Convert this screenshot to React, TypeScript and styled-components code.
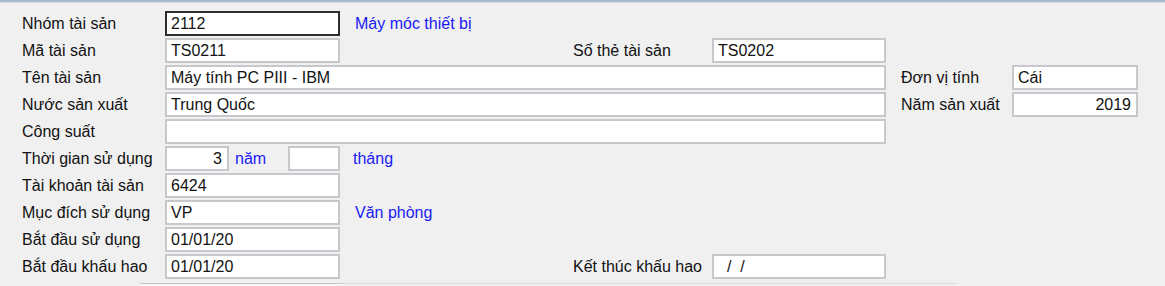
import React from "react";
import styled, { createGlobalStyle } from "styled-components";

const Global = createGlobalStyle`
  html, body { margin: 0; padding: 0; background: #f0f0f0; }
  body { font-family: "Liberation Sans", Arial, sans-serif; }
`;

const Panel = styled.div`
  width: 1165px;
  height: 286px;
  box-sizing: border-box;
  background: #f0f0f0;
  border-top: 2px solid #a9b9cb;
  box-shadow: inset 0 1px 0 #d9dfe6;
  padding-top: 9px;
  display: flex;
  flex-direction: column;
  gap: 2px;
  overflow: hidden;
  font-size: 16px;
  color: #121212;
`;

const Row = styled.div`
  display: flex;
  align-items: center;
  height: 25px;
  padding-left: 22px;
`;

const Label = styled.div<{ $w: number; $ml?: number }>`
  width: ${(p) => p.$w}px;
  margin-left: ${(p) => p.$ml ?? 0}px;
  white-space: nowrap;
  line-height: 25px;
  flex: none;
`;

const Hint = styled.div<{ $ml: number; $w?: number }>`
  margin-left: ${(p) => p.$ml}px;
  ${(p) => (p.$w ? `width: ${p.$w}px;` : "")}
  color: #1a1af5;
  white-space: nowrap;
  line-height: 25px;
  flex: none;
`;

const Field = styled.div<{ $w: number; $focus?: boolean; $right?: boolean }>`
  width: ${(p) => p.$w}px;
  height: 25px;
  box-sizing: border-box;
  background: #ffffff;
  border: 2px solid ${(p) => (p.$focus ? "#2e2e2e" : "#c7c7cc")};
  padding: 0 ${(p) => (p.$right ? 5 : 4)}px 0 4px;
  line-height: 21px;
  text-align: ${(p) => (p.$right ? "right" : "left")};
  white-space: nowrap;
  overflow: hidden;
  flex: none;
`;

const Bottom = styled.div`
  display: flex;
  margin-top: 2px;
  height: 4px;
  padding-left: 140px;
`;

const Stub = styled.div<{ $w: number; $c: string }>`
  width: ${(p) => p.$w}px;
  border-top: 1px solid ${(p) => p.$c};
  background: ${(p) => (p.$c === "#c3c3c7" ? "#f7f7f7" : "transparent")};
  flex: none;
`;

const LW = 143;

export default function App() {
  return (
    <>
      <Global />
      <Panel>
        <Row>
          <Label $w={LW}>Nhóm tài sản</Label>
          <Field $w={175} $focus>2112</Field>
          <Hint $ml={15}>Máy móc thiết bị</Hint>
        </Row>
        <Row>
          <Label $w={LW}>Mã tài sản</Label>
          <Field $w={175}>TS0211</Field>
          <Label $w={139} $ml={233}>Số thẻ tài sản</Label>
          <Field $w={174}>TS0202</Field>
        </Row>
        <Row>
          <Label $w={LW}>Tên tài sản</Label>
          <Field $w={721}>Máy tính PC PIII - IBM</Field>
          <Label $w={111} $ml={15}>Đơn vị tính</Label>
          <Field $w={126}>Cái</Field>
        </Row>
        <Row>
          <Label $w={LW}>Nước sản xuất</Label>
          <Field $w={721}>Trung Quốc</Field>
          <Label $w={111} $ml={15}>Năm sản xuất</Label>
          <Field $w={126} $right>2019</Field>
        </Row>
        <Row>
          <Label $w={LW}>Công suất</Label>
          <Field $w={721}></Field>
        </Row>
        <Row>
          <Label $w={LW}>Thời gian sử dụng</Label>
          <Field $w={64} $right>3</Field>
          <Hint $ml={6} $w={53}>năm</Hint>
          <Field $w={52}></Field>
          <Hint $ml={13}>tháng</Hint>
        </Row>
        <Row>
          <Label $w={LW}>Tài khoản tài sản</Label>
          <Field $w={175}>6424</Field>
        </Row>
        <Row>
          <Label $w={LW}>Mục đích sử dụng</Label>
          <Field $w={175}>VP</Field>
          <Hint $ml={15}>Văn phòng</Hint>
        </Row>
        <Row>
          <Label $w={LW}>Bắt đầu sử dụng</Label>
          <Field $w={175}>01/01/20</Field>
        </Row>
        <Row>
          <Label $w={LW}>Bắt đầu khấu hao</Label>
          <Field $w={175}>01/01/20</Field>
          <Label $w={139} $ml={233}>Kết thúc khấu hao</Label>
          <Field $w={174}>&nbsp;&nbsp;/&nbsp;&nbsp;/</Field>
        </Row>
        <Bottom>
          <Stub $w={203} $c="#c3c3c7" />
          <Stub $w={247} $c="#dadada" />
          <Stub $w={177} $c="#dadada" />
          <Stub $w={190} $c="#dadada" />
        </Bottom>
      </Panel>
    </>
  );
}
